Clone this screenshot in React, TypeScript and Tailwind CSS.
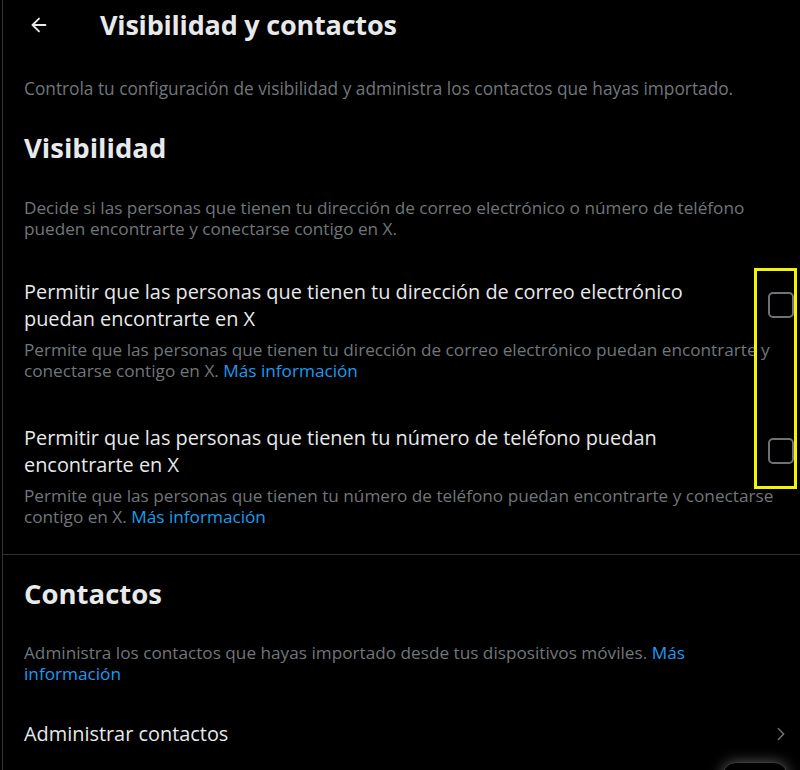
import React from "react";
import { ArrowLeft, ChevronRight } from "lucide-react";

const font = { fontFamily: '"Open Sans", "Noto Sans", Arial, sans-serif' };

function Checkbox() {
  return <div className="w-[26px] h-[26px] rounded-[5px] border-2 border-[#6e7275] shrink-0" />;
}

export default function App() {
  return (
    <div className="relative w-[800px] h-[770px] bg-black overflow-hidden text-[#e7e9ea]" style={font}>
      <div className="ml-[2px] h-full border-l border-[#2f3336] pl-[21px] pr-[6px]">
        {/* Header */}
        <div className="h-[50px] flex items-center">
          <div className="w-[76px] pl-[4px] flex items-center">
            <ArrowLeft size={22} strokeWidth={2} className="text-[#e7e9ea]" />
          </div>
          <h1 className="text-[27px] font-bold leading-[32px] tracking-[-0.2px]">Visibilidad y contactos</h1>
        </div>

        <p className="mt-[28px] text-[17.3px] leading-[21px] text-[#71767b] whitespace-nowrap">
          Controla tu configuración de visibilidad y administra los contactos que hayas importado.
        </p>

        <h2 className="mt-[33px] text-[27.5px] font-bold leading-[32px]">Visibilidad</h2>

        <p className="mt-[33px] text-[17.2px] leading-[21px] text-[#71767b] whitespace-nowrap">
          Decide si las personas que tienen tu dirección de correo electrónico o número de teléfono
          <br />
          pueden encontrarte y conectarse contigo en X.
        </p>

        {/* Option 1 */}
        <div className="mt-[39px] flex items-center justify-between">
          <div className="text-[19.9px] leading-[27px] whitespace-nowrap">
            Permitir que las personas que tienen tu dirección de correo electrónico
            <br />
            puedan encontrarte en X
          </div>
          <Checkbox />
        </div>
        <p className="mt-[7px] text-[17.2px] leading-[21px] text-[#71767b] whitespace-nowrap">
          Permite que las personas que tienen tu dirección de correo electrónico puedan encontrarte y
          <br />
          conectarse contigo en X. <span className="text-[#1d9bf0]">Más información</span>
        </p>

        {/* Option 2 */}
        <div className="mt-[43px] flex items-center justify-between">
          <div className="text-[19.9px] leading-[27px] whitespace-nowrap">
            Permitir que las personas que tienen tu número de teléfono puedan
            <br />
            encontrarte en X
          </div>
          <Checkbox />
        </div>
        <p className="mt-[7px] text-[17.2px] leading-[21px] text-[#71767b] whitespace-nowrap">
          Permite que las personas que tienen tu número de teléfono puedan encontrarte y conectarse
          <br />
          contigo en X. <span className="text-[#1d9bf0]">Más información</span>
        </p>

        <div className="mt-[27px] -ml-[21px] -mr-[6px] h-px bg-[#2f3336]" />

        <h2 className="mt-[23px] text-[27.5px] font-bold leading-[32px]">Contactos</h2>

        <p className="mt-[32px] text-[17.2px] leading-[21px] text-[#71767b] whitespace-nowrap">
          Administra los contactos que hayas importado desde tus dispositivos móviles.{" "}
          <span className="text-[#1d9bf0]">Más</span>
          <br />
          <span className="text-[#1d9bf0]">información</span>
        </p>

        <div className="mt-[36px] flex items-center justify-between">
          <span className="text-[19.9px] leading-[27px]">Administrar contactos</span>
          <ChevronRight size={22} strokeWidth={1.5} className="text-[#71767b] mr-[2px]" />
        </div>
      </div>

      {/* annotation highlight */}
      <div className="absolute left-[754px] top-[268px] w-[43px] h-[221px] border-[3px] border-[#f2f20a]" />

      {/* messages drawer peek */}
      <div className="absolute left-[722px] top-[762px] w-[66px] h-[40px] rounded-[14px] bg-black border border-[#3a3a3a] shadow-[0_0_14px_rgba(255,255,255,0.35)]" />
    </div>
  );
}
